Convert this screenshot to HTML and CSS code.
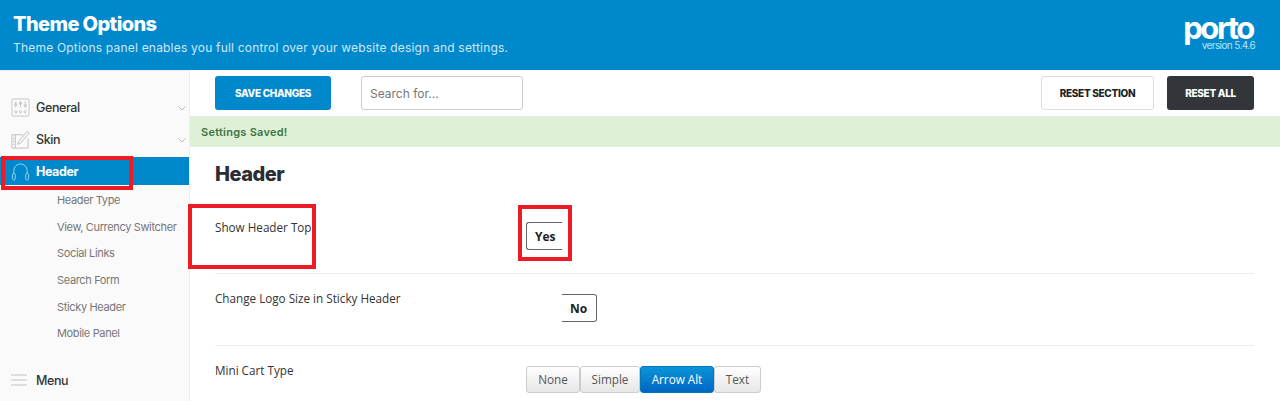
FILE: index.html
```html
<!DOCTYPE html>
<html lang="en">
<head>
<meta charset="utf-8">
<title>Theme Options</title>
<link rel="stylesheet" href="styles.css">
</head>
<body>
<div class="page">
  <header class="banner">
    <div class="banner-text">
      <h1>Theme Options</h1>
      <p>Theme Options panel enables you full control over your website design and settings.</p>
    </div>
    <div class="brand">
      <span class="brand-name">porto</span>
      <span class="brand-version">version 5.4.6</span>
    </div>
  </header>
  <div class="body-row">
    <nav class="sidebar">
      <a class="nav-item">
        <svg class="nav-icon" viewBox="0 0 20 20" fill="none" stroke="#c4c4c4"><rect x="1" y="1" width="18" height="18" rx="1"/><path d="M5 3.500V10M10 3.500V10M15 3.500V10"/><circle cx="5" cy="7" r="1.300"/><circle cx="10" cy="5.500" r="1.300"/><circle cx="15" cy="8" r="1.300"/><circle cx="5" cy="14.500" r="1.200"/><circle cx="10" cy="14.500" r="1.200"/><circle cx="15" cy="14.500" r="1.200"/></svg>
        <span>General</span>
        <svg class="chev" viewBox="0 0 8 5" fill="none" stroke="#bbb"><path d="M.5.500 4 4 7.500.500"/></svg>
      </a>
      <a class="nav-item">
        <svg class="nav-icon" viewBox="0 0 20 20" fill="none" stroke="#bdbdbd"><path d="M13 5H1v14h17V9"/><path d="M4.500 5v14M2 9h1.500M2 12h1.500M2 15h1.500"/><path d="M8 12L17 1.500l2 2L10 14l-3 1z"/></svg>
        <span>Skin</span>
        <svg class="chev" viewBox="0 0 8 5" fill="none" stroke="#bbb"><path d="M.5.500 4 4 7.500.500"/></svg>
      </a>
      <a class="nav-item nav-active">
        <svg class="nav-icon" viewBox="0 0 20 20" fill="none" stroke="#9fd4ef"><path d="M3 12V9a7 7 0 0 1 14 0v3"/><rect x="1.500" y="12" width="3" height="7" rx="1.500"/><rect x="15.500" y="12" width="3" height="7" rx="1.500"/></svg>
        <span>Header</span>
      </a>
      <ul class="subnav">
        <li>Header Type</li>
        <li>View, Currency Switcher</li>
        <li>Social Links</li>
        <li>Search Form</li>
        <li>Sticky Header</li>
        <li>Mobile Panel</li>
      </ul>
      <a class="nav-item nav-menu">
        <svg class="nav-icon" viewBox="0 0 16 12" fill="none" stroke="#c4c4c4"><path d="M0 1h16M0 6h16M0 11h16"/></svg>
        <span>Menu</span>
      </a>
    </nav>
    <main class="main">
      <div class="toolbar">
        <button class="btn btn-primary">SAVE CHANGES</button>
        <div class="search">Search for...</div>
        <button class="btn btn-outline">RESET SECTION</button>
        <button class="btn btn-dark">RESET ALL</button>
      </div>
      <div class="notice">Settings Saved!</div>
      <section class="content">
        <h2>Header</h2>
        <div class="field field-first">
          <span class="field-label">Show Header Top</span>
          <div class="field-control"><span class="toggle toggle-yes">Yes</span></div>
        </div>
        <div class="field field-second">
          <span class="field-label">Change Logo Size in Sticky Header</span>
          <div class="field-control"><span class="toggle toggle-no">No</span></div>
        </div>
        <div class="field field-third">
          <span class="field-label">Mini Cart Type</span>
          <div class="field-control btn-group">
            <span class="seg seg-none">None</span>
            <span class="seg seg-simple">Simple</span>
            <span class="seg seg-on">Arrow Alt</span>
            <span class="seg seg-text">Text</span>
          </div>
        </div>
      </section>
    </main>
  </div>
  <div class="mark mark-nav"></div>
  <div class="mark mark-label"></div>
  <div class="mark mark-toggle"></div>
</div>
</body>
</html>
```
FILE: styles.css
```css
* { box-sizing: border-box; }
html, body { margin: 0; height: 401px; overflow: hidden; }
body { background: #fff; font-family: "Inter", "Liberation Sans", sans-serif; color: #333; }
.page { position: relative; width: 1280px; height: 401px; overflow: hidden; }

.banner { height: 70px; background: #0088cc; color: #fff; display: flex; justify-content: space-between; padding: 13px 25px 0 13px; }
.banner h1 { margin: 0; font-size: 20px; line-height: 23px; font-weight: 800; letter-spacing: -.6px; }
.banner p { margin: 3px 0 0; font-size: 12px; line-height: 17px; color: #cfe9f7; letter-spacing: .2px; }
.brand { display: flex; flex-direction: column; align-items: flex-end; width: 72px; padding-top: 3px; }
.brand-name { font-size: 31px; line-height: 24px; font-weight: 700; letter-spacing: -2.400px; margin-right: 2px; }
.brand-version { font-size: 10px; line-height: 11px; color: #bfe3f5; letter-spacing: -.6px; }

.body-row { display: flex; height: 331px; }
.sidebar { width: 190px; flex: none; background: #fafafa; border-right: 1px solid #eee; border-top: 1px solid #e8eef2; padding-top: 20px; position: relative; }
.nav-item { display: flex; align-items: center; height: 32px; padding-left: 11px; font-size: 12.500px; font-weight: 500; color: #333; letter-spacing: -.4px; position: relative; }
.nav-item span { margin-left: 6px; }
.nav-icon { width: 19px; height: 19px; flex: none; }
.chev { position: absolute; right: 3px; top: 15px; width: 8px; height: 5px; }
.nav-active { background: #0088cc; color: #fff; font-weight: 700; height: 28px; margin-top: 2px; }
.nav-menu { margin-top: 17px; }
.nav-menu .nav-icon { height: 14px; width: 16px; margin-right: 3px; }
.subnav { list-style: none; margin: 0; padding: 2px 0 0 57px; font-size: 11px; color: #777; letter-spacing: -.35px; }
.subnav li { height: 26.700px; line-height: 26.700px; white-space: nowrap; }

.main { flex: 1; min-width: 0; }
.toolbar { height: 46px; display: flex; align-items: flex-start; padding: 6px 26px 0 25px; }
.btn { height: 34px; border-radius: 3px; font: 800 10px "Inter", sans-serif; letter-spacing: -.3px; border: 1px solid transparent; padding: 0; }
.btn-primary { width: 116px; background: #0088cc; color: #fff; }
.search { width: 162px; height: 34px; margin-left: 30px; border: 1px solid #ccc; border-radius: 3px; padding-left: 8px; font-size: 12px; line-height: 33px; color: #777; }
.btn-outline { width: 113px; margin-left: auto; background: #fff; border-color: #ddd; color: #222; }
.btn-dark { width: 87px; margin-left: 13px; background: #32363a; color: #fff; }

.notice { height: 31px; background: #dff0d8; color: #3c763d; font-size: 11px; font-weight: 600; line-height: 32px; padding-left: 11px; letter-spacing: .25px; }
.content { padding: 0 26px 0 25px; }
.content h2 { margin: 0; font-size: 20px; line-height: 24px; padding-top: 15px; height: 57px; font-weight: 800; letter-spacing: -.5px; color: #2a2d31; }
.field { display: flex; align-items: flex-start; border-bottom: 1px solid #eee; font-family: "Open Sans", sans-serif; }
.field-first { height: 70px; padding-top: 15px; }
.field-second { height: 72px; padding-top: 16px; }
.field-third { padding-top: 16px; border-bottom: 0; }
.field-label { width: 311px; flex: none; font-size: 11.700px; line-height: 17px; color: #333; }
.field-control { display: flex; }

.toggle { display: block; height: 28px; font-weight: 700; font-size: 12px; line-height: 27px; color: #222; background: #fff; border: 1px solid #666; }
.toggle-yes { width: 36px; margin-top: 3px; padding-left: 8px; border-right: 0; border-radius: 3px 0 0 3px; }
.toggle-no { width: 35px; margin-left: 36px; margin-top: 4px; padding-left: 8px; border-left: 0; border-radius: 0 3px 3px 0; }

.btn-group { margin-top: 4px; }
.seg { display: block; height: 27px; line-height: 25px; font-size: 11.700px; text-align: center; color: #555; background: linear-gradient(#fff, #e6e6e6); border: 1px solid #ccc; border-radius: 3px; }
.seg-none { width: 54px; }
.seg-simple { width: 60px; }
.seg-on { width: 74px; color: #fff; background: linear-gradient(#0b94d8, #0066c4); border-color: #0077bb; }
.seg-text { width: 47px; }

.mark { position: absolute; border: 4px solid #ed1c24; }
.mark-nav { left: 1px; top: 156px; width: 132px; height: 34px; }
.mark-label { left: 188px; top: 204px; width: 128px; height: 65px; }
.mark-toggle { left: 518px; top: 205px; width: 54px; height: 56px; }
```
